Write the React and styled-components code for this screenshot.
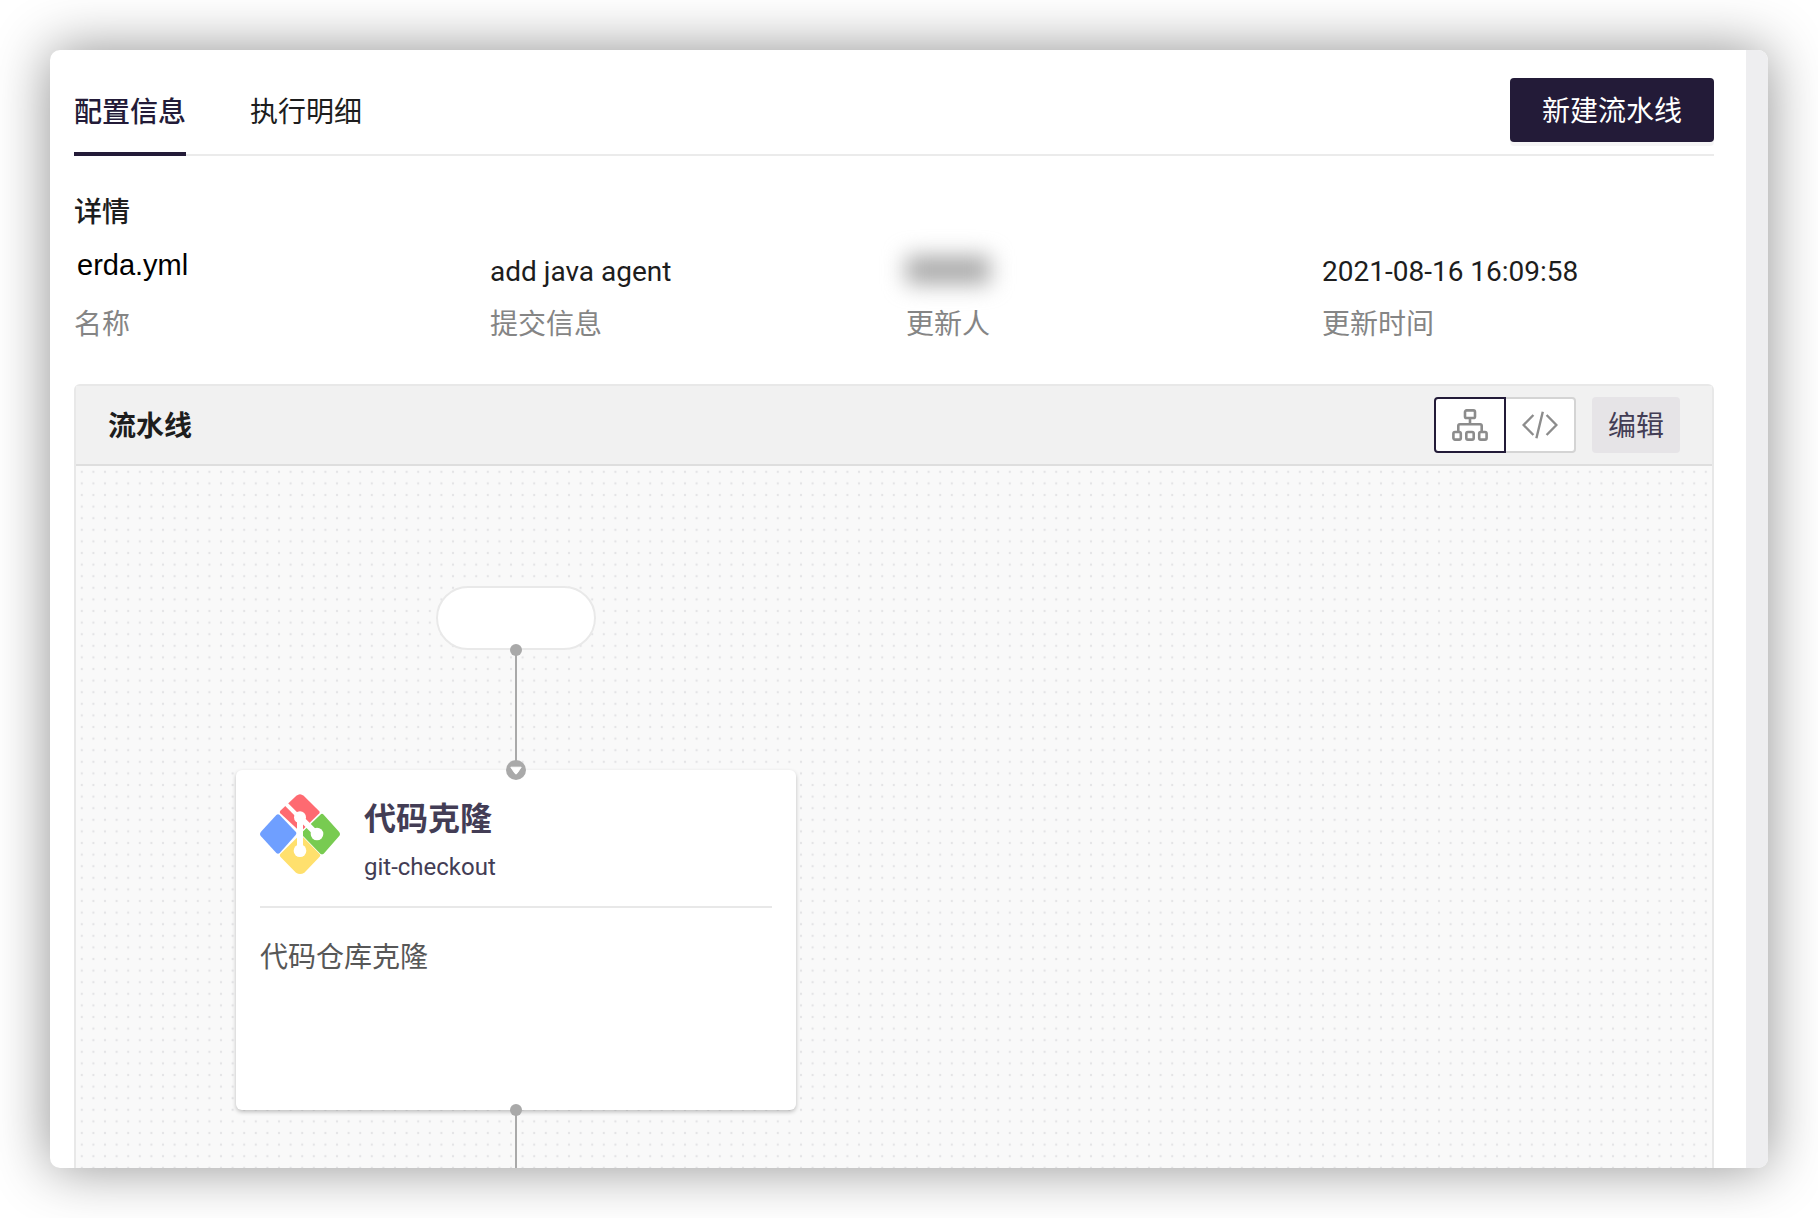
import React, { useState } from 'react'
import styled, { createGlobalStyle } from 'styled-components'

const GlobalStyle = createGlobalStyle`
  * {
    box-sizing: border-box;
  }
  body {
    margin: 0;
    background: #fff;
    color: #1d1d1d;
    font-family: Roboto, "Noto Sans CJK SC", sans-serif;
    font-size: 28px;
    line-height: 40px;
  }
  button {
    font: inherit;
    cursor: pointer;
  }
`

const Page = styled.div`
  display: flex;
  min-height: 100vh;
  padding: 50px;
`

const Window = styled.div`
  flex: 1;
  display: flex;
  min-width: 0;
  border-radius: 10px;
  background: #fff;
  overflow: hidden;
  box-shadow: 0 0 56px rgba(0, 0, 0, 0.44);
`

const Content = styled.main`
  flex: 1;
  display: flex;
  flex-direction: column;
  min-width: 0;
  padding: 28px 32px 0 24px;
`

const ScrollTrack = styled.div`
  flex: none;
  width: 22px;
  background: #eeeef0;
`

const Header = styled.header`
  display: flex;
  justify-content: space-between;
  border-bottom: 2px solid #ebebeb;
`

const Tabs = styled.nav`
  display: flex;
  align-items: flex-end;
  gap: 64px;
  margin-bottom: -2px;
`

const Tab = styled.button`
  padding: 0 0 19px;
  border: 0;
  border-bottom: 4px solid ${(props) => (props.$active ? '#231b38' : 'transparent')};
  background: none;
  color: ${(props) => (props.$active ? '#231b38' : '#1d1d1d')};
  font-weight: ${(props) => (props.$active ? 500 : 400)};
`

const PrimaryButton = styled.button`
  height: 64px;
  margin-bottom: 12px;
  padding: 4px 32px 0;
  border: 0;
  border-radius: 4px;
  background: #231b38;
  box-shadow: 0 4px 0 rgba(0, 0, 0, 0.04);
  color: #fff;
`

const SectionTitle = styled.h2`
  margin: 37px 0 19px;
  font-size: 28px;
  font-weight: 500;
`

const Details = styled.dl`
  display: grid;
  grid-template-columns: repeat(4, 1fr);
  gap: 24px;
  margin: 0 0 39px;
`

const Field = styled.div`
  display: flex;
  flex-direction: column-reverse;
  gap: 13px;
  dt {
    color: #858585;
  }
  dd {
    height: 40px;
    margin: 0;
  }
`

const FileName = styled.span`
  display: block;
  padding-left: 3px;
  color: #000;
  font-family: "Liberation Sans", Arial, sans-serif;
  font-size: 29px;
  line-height: 26px;
`

const HiddenName = styled.span`
  display: block;
  width: 84px;
  height: 28px;
  margin-top: 4px;
  background: #a8a8a8;
  filter: blur(11px);
`

const Panel = styled.section`
  flex: 1;
  display: flex;
  flex-direction: column;
  border: 2px solid #e8e8e8;
  border-bottom: 0;
  border-radius: 6px 6px 0 0;
`

const PanelHeader = styled.div`
  display: flex;
  align-items: center;
  gap: 16px;
  height: 80px;
  padding: 0 32px;
  border-bottom: 2px solid #dedede;
  background: #f1f1f1;
  h3 {
    flex: 1;
    margin: 0;
    padding-top: 4px;
    font-size: 28px;
    font-weight: 700;
  }
`

const ViewSwitch = styled.div`
  display: flex;
`

const ViewButton = styled.button`
  display: flex;
  align-items: center;
  justify-content: center;
  width: 72px;
  height: 56px;
  padding: 0;
  border: 2px solid ${(props) => (props.$active ? '#231b38' : '#d4d4d4')};
  background: #fff;
  color: #8c8c8c;
  &:first-child {
    z-index: ${(props) => (props.$active ? 1 : 0)};
    border-radius: 4px 0 0 4px;
  }
  &:last-child {
    margin-left: -2px;
    border-radius: 0 4px 4px 0;
  }
`

const EditButton = styled.button`
  height: 56px;
  padding: 4px 16px 0;
  border: 0;
  border-radius: 4px;
  background: #e6e4e7;
  color: #433d55;
`

const Canvas = styled.div`
  position: relative;
  flex: 1;
  padding: 120px 160px 0;
  background: #f9f9f9;
`

const Grid = styled.svg`
  position: absolute;
  inset: 0;
  width: 100%;
  height: 100%;
`

const Flow = styled.div`
  position: relative;
  display: flex;
  flex-direction: column;
  align-items: center;
  width: 560px;
  height: 100%;
`

const StartNode = styled.div`
  width: 160px;
  height: 64px;
  border: 2px solid #e9e9e9;
  border-radius: 32px;
  background: #fff;
`

const Link = styled.div`
  position: relative;
  z-index: 1;
  width: 2px;
  height: ${(props) => (props.$last ? 58 : 120)}px;
  background: #a9a9a9;
  &::before {
    content: '';
    position: absolute;
    top: -6px;
    left: -5px;
    width: 12px;
    height: 12px;
    border-radius: 50%;
    background: #a9a9a9;
  }
`

const Arrow = styled.svg`
  position: absolute;
  bottom: -10px;
  left: -9px;
`

const Card = styled.article`
  width: 100%;
  height: 340px;
  padding: 24px;
  border-radius: 6px;
  background: #fff;
  box-shadow: 0 2px 4px rgba(0, 0, 0, 0.24);
  p {
    margin: 30px 0 0;
    color: #575757;
  }
`

const CardHead = styled.div`
  display: flex;
  gap: 24px;
  height: 114px;
  border-bottom: 2px solid #e8e8e8;
  color: #433d55;
  h4 {
    margin: 5px 0 8px;
    font-size: 32px;
    font-weight: 700;
  }
  span {
    display: block;
    font-size: 24px;
  }
`

const FlowIcon = () => (
  <svg width="36" height="32" viewBox="0 0 36 32" fill="none" stroke="currentColor" strokeWidth="2.6" aria-hidden="true">
    <rect x="13" y="1.4" width="10" height="7.6" rx="1.6" />
    <rect x="1.4" y="23" width="7.4" height="7.6" rx="1.6" />
    <rect x="14.3" y="23" width="7.4" height="7.6" rx="1.6" />
    <rect x="27.2" y="23" width="7.4" height="7.6" rx="1.6" />
    <path d="M18 9v6M6.3 23v-6.2a1.6 1.6 0 0 1 1.6-1.6h20.2a1.6 1.6 0 0 1 1.6 1.6V23" />
  </svg>
)

const CodeIcon = () => (
  <svg width="36" height="28" viewBox="0 0 36 28" fill="none" stroke="currentColor" strokeWidth="2.4" aria-hidden="true">
    <path d="M11.4 4 1.6 14l9.8 10M24.6 4l9.8 10-9.8 10M20.8.8 14.4 27.2" />
  </svg>
)

const GitLogo = () => (
  <svg width="80" height="80" viewBox="0 0 240 240" aria-hidden="true">
    <path fill="#6f9fff" d="M49 63q5-5 10 0l48 50q4 5 0 10l-48 54q-5 5-10 0L3 127q-6-7 0-14z" />
    <path fill="#fe6a71" d="M109 5q11-9 22 0l47 47q2 3 0 6l-50 49q-7 5-14 0L61 58q-3-4 0-8z" />
    <path fill="#78cb51" d="M181 62q5-5 10 0l46 51q6 7 0 14l-46 52q-5 4-10 0l-54-55q-4-5 0-10z" />
    <path fill="#ffe06d" d="M116 126q5-4 10 0l53 54q4 4 0 8l-46 48q-13 8-25 0l-47-48q-3-4 0-8z" />
    <g stroke="#fff" fill="none">
      <path strokeWidth="12" d="M74 26l40 40" />
      <path strokeWidth="18" d="M120 70v100M122 72l48 48" />
    </g>
    <g fill="#fff">
      <circle cx="120" cy="70" r="18" />
      <circle cx="171" cy="120" r="19" />
      <circle cx="120" cy="170" r="19" />
    </g>
  </svg>
)

const DotGrid = () => (
  <Grid aria-hidden="true">
    <defs>
      <pattern id="dots" x="0" y="0" width="11.6" height="11.6" patternUnits="userSpaceOnUse">
        <circle cx="5.8" cy="5.8" r="1.2" fill="#e4e4e6" />
      </pattern>
    </defs>
    <rect width="100%" height="100%" fill="url(#dots)" />
  </Grid>
)

const tabs = ['配置信息', '执行明细']

const App = () => {
  const [tab, setTab] = useState(tabs[0])
  const [view, setView] = useState('graph')

  return (
    <>
      <GlobalStyle />
      <Page>
        <Window>
          <Content>
            <Header>
              <Tabs>
                {tabs.map((name) => (
                  <Tab key={name} type="button" $active={tab === name} onClick={() => setTab(name)}>{name}</Tab>
                ))}
              </Tabs>
              <PrimaryButton type="button">新建流水线</PrimaryButton>
            </Header>

            <SectionTitle>详情</SectionTitle>
            <Details>
              <Field>
                <dt>名称</dt>
                <dd><FileName>erda.yml</FileName></dd>
              </Field>
              <Field>
                <dt>提交信息</dt>
                <dd>add java agent</dd>
              </Field>
              <Field>
                <dt>更新人</dt>
                <dd><HiddenName /></dd>
              </Field>
              <Field>
                <dt>更新时间</dt>
                <dd>2021-08-16 16:09:58</dd>
              </Field>
            </Details>

            <Panel>
              <PanelHeader>
                <h3>流水线</h3>
                <ViewSwitch>
                  <ViewButton type="button" aria-label="图形" $active={view === 'graph'} onClick={() => setView('graph')}>
                    <FlowIcon />
                  </ViewButton>
                  <ViewButton type="button" aria-label="代码" $active={view === 'code'} onClick={() => setView('code')}>
                    <CodeIcon />
                  </ViewButton>
                </ViewSwitch>
                <EditButton type="button">编辑</EditButton>
              </PanelHeader>
              <Canvas>
                <DotGrid />
                <Flow>
                  <StartNode />
                  <Link>
                    <Arrow width="20" height="20" viewBox="0 0 20 20" aria-hidden="true">
                      <circle cx="10" cy="10" r="10" fill="#a9a9a9" />
                      <path d="M4.8 7.2h10.4L11 13.4q-1 1.2-2 0z" fill="#fff" stroke="#fff" strokeLinejoin="round" />
                    </Arrow>
                  </Link>
                  <Card>
                    <CardHead>
                      <GitLogo />
                      <div>
                        <h4>代码克隆</h4>
                        <span>git-checkout</span>
                      </div>
                    </CardHead>
                    <p>代码仓库克隆</p>
                  </Card>
                  <Link $last />
                </Flow>
              </Canvas>
            </Panel>
          </Content>
          <ScrollTrack />
        </Window>
      </Page>
    </>
  )
}

export default App
